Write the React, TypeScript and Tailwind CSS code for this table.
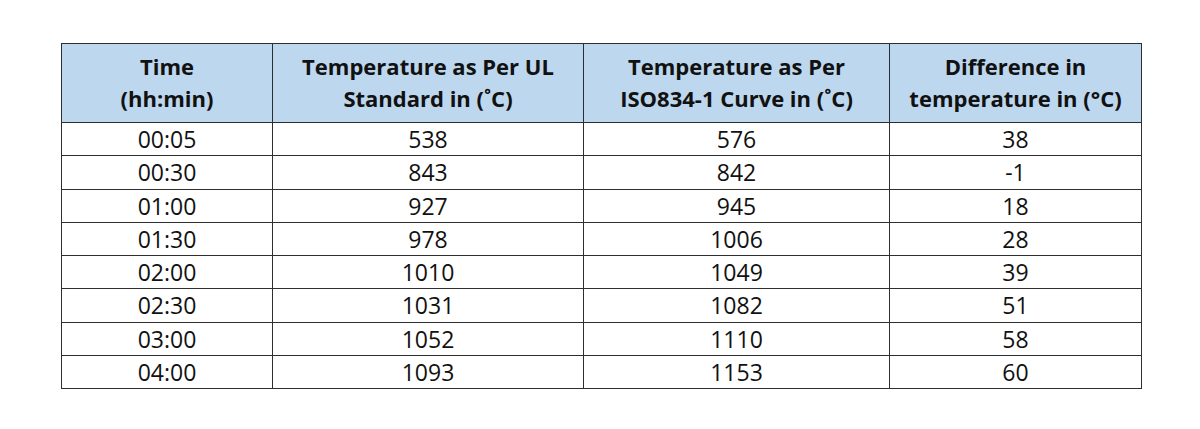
const rows = [
  ["00:05", "538", "576", "38"],
  ["00:30", "843", "842", "-1"],
  ["01:00", "927", "945", "18"],
  ["01:30", "978", "1006", "28"],
  ["02:00", "1010", "1049", "39"],
  ["02:30", "1031", "1082", "51"],
  ["03:00", "1052", "1110", "58"],
  ["04:00", "1093", "1153", "60"],
];

const headers = [
  ["Time", "(hh:min)"],
  ["Temperature as Per UL", "Standard in (˚C)"],
  ["Temperature as Per", "ISO834-1 Curve in (˚C)"],
  ["Difference in", "temperature in (°C)"],
];

export default function App() {
  return (
    <div className="w-[1200px] h-[429px] bg-white pt-[43px] pl-[61px] font-['Open_Sans',sans-serif] text-[#111]">
      <table className="w-[1080px] border-collapse table-fixed">
        <colgroup>
          <col className="w-[211px]" />
          <col className="w-[311px]" />
          <col className="w-[306px]" />
          <col className="w-[252px]" />
        </colgroup>
        <thead>
          <tr className="h-[79px] bg-[#bdd7ee]">
            {headers.map((h) => (
              <th
                key={h[0]}
                className="border-[1.5px] border-[#2e2e2e] text-center align-middle font-bold text-[22px] leading-[32px] pb-[2px]"
              >
                {h[0]}
                <br />
                {h[1]}
              </th>
            ))}
          </tr>
        </thead>
        <tbody>
          {rows.map((r) => (
            <tr key={r[0]} className="h-[33.25px]">
              {r.map((c, i) => (
                <td
                  key={i}
                  className="border-[1.5px] border-[#2e2e2e] text-center align-middle text-[23px] leading-[30px] p-0"
                >
                  {c}
                </td>
              ))}
            </tr>
          ))}
        </tbody>
      </table>
    </div>
  );
}
